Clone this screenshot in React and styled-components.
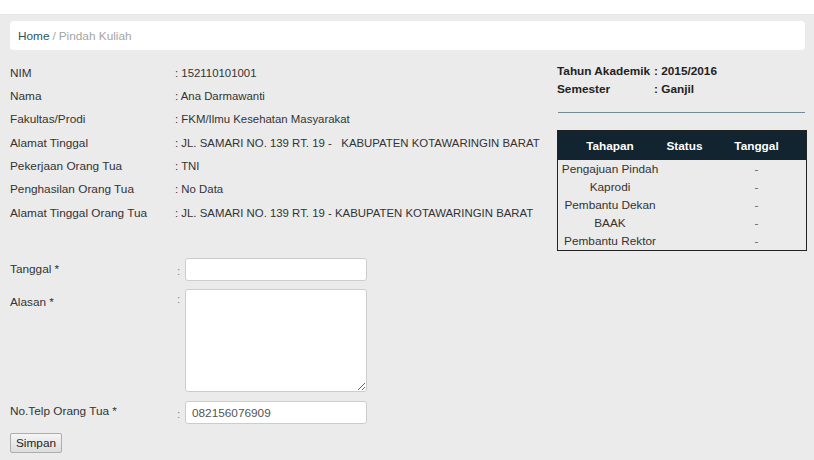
import React from 'react'
import styled, { createGlobalStyle } from 'styled-components'

const GlobalStyle = createGlobalStyle`
  body {
    margin: 0;
    background: #ebebeb;
    font-family: "Liberation Sans", Arial, sans-serif;
    font-size: 11.8px;
    color: #333;
  }
`

const TopStrip = styled.div`
  height: 14px;
  background: #fff;
  border-bottom: 1px solid #e4e4e4;
`

const Page = styled.div`
  padding: 6px 9px 0 10px;
`

const Breadcrumb = styled.div`
  height: 29px;
  background: #fff;
  border-radius: 4px;
  display: flex;
  align-items: center;
  padding: 0 8px;
  color: #a5a5a5;
`

const Crumb = styled.span`
  color: ${p => (p.$active ? '#2a5566' : '#a5a5a5')};
  margin-right: 3px;
`

const Content = styled.div`
  display: flex;
  padding-top: 11px;
`

const Left = styled.div`
  flex: 1;
  min-width: 0;
`

const InfoGrid = styled.div`
  display: grid;
  grid-template-columns: 165px 1fr;
  grid-auto-rows: 23.33px;
  align-items: center;
  line-height: 14px;
`

const Value = styled.div`
  white-space: pre;
  font-size: 11.4px;
`

const Right = styled.div`
  width: 248px;
  flex-shrink: 0;
  margin-top: 1px;
`

const MetaGrid = styled.div`
  display: grid;
  grid-template-columns: 97px auto;
  grid-auto-rows: 18px;
  align-items: center;
  font-weight: bold;
  color: #222;
`

const Rule = styled.hr`
  border: none;
  border-top: 1px solid #6f8c96;
  margin: 14px 0 0 1px;
`

const StageTable = styled.table`
  margin-top: 17px;
  width: 248px;
  border-collapse: collapse;
  table-layout: fixed;
  border: 1px solid #222;
  font-size: 11.8px;
`

const Th = styled.th`
  height: 29px;
  background: #11242f;
  color: #fff;
  font-weight: bold;
  padding: 0;
  text-align: center;
  width: ${p => p.$w}px;
`

const Td = styled.td`
  height: 18px;
  padding: 0;
  text-align: center;
  color: ${p => (p.$muted ? '#666' : '#333')};
  white-space: nowrap;
`

const Form = styled.form`
  margin-top: 34px;
`

const FormRow = styled.div`
  display: grid;
  grid-template-columns: 165px 10px 182px;
  margin-bottom: ${p => p.$gap}px;
`

const Label = styled.label`
  padding-top: ${p => p.$top}px;
  line-height: 14px;
`

const Colon = styled.span`
  align-self: ${p => (p.$multiline ? 'start' : 'end')};
  padding: ${p => (p.$multiline ? '3px 0 0 2px' : '0 0 3px 2px')};
  line-height: 14px;
  color: #888;
`

const TextInput = styled.input`
  box-sizing: border-box;
  width: 182px;
  height: 23px;
  border: 1px solid #ccc;
  border-radius: 3px;
  background: #fff;
  padding: 0 6px;
  font-family: inherit;
  font-size: 11.8px;
  color: #555;
  outline: none;
`

const TextArea = styled.textarea`
  box-sizing: border-box;
  width: 182px;
  height: 103px;
  border: 1px solid #ccc;
  border-radius: 3px;
  background: #fff;
  padding: 4px 6px;
  font-family: inherit;
  font-size: 11.8px;
  display: block;
  outline: none;
`

const SaveButton = styled.button`
  height: 20px;
  padding: 0 5px;
  font-family: inherit;
  font-size: 11.8px;
  color: #222;
  border: 1px solid #adadad;
  border-radius: 2px;
  background: linear-gradient(#f5f5f5, #dddddd);
`

const info = [
  ['NIM', '152110101001'],
  ['Nama', 'Ana Darmawanti'],
  ['Fakultas/Prodi', 'FKM/Ilmu Kesehatan Masyarakat'],
  ['Alamat Tinggal', 'JL. SAMARI NO. 139 RT. 19 -   KABUPATEN KOTAWARINGIN BARAT'],
  ['Pekerjaan Orang Tua', 'TNI'],
  ['Penghasilan Orang Tua', 'No Data'],
  ['Alamat Tinggal Orang Tua', 'JL. SAMARI NO. 139 RT. 19 - KABUPATEN KOTAWARINGIN BARAT'],
]

const stages = ['Pengajuan Pindah', 'Kaprodi', 'Pembantu Dekan', 'BAAK', 'Pembantu Rektor']

export default function App() {
  return (
    <>
      <GlobalStyle />
      <TopStrip />
      <Page>
        <Breadcrumb>
          <Crumb $active>Home</Crumb>
          <Crumb>/</Crumb>
          <Crumb>Pindah Kuliah</Crumb>
        </Breadcrumb>
        <Content>
          <Left>
            <InfoGrid>
              {info.map(([k, v]) => (
                <React.Fragment key={k}>
                  <div>{k}</div>
                  <Value>: {v}</Value>
                </React.Fragment>
              ))}
            </InfoGrid>
            <Form onSubmit={e => e.preventDefault()}>
              <FormRow $gap={8}>
                <Label $top={4}>Tanggal *</Label>
                <Colon>:</Colon>
                <TextInput type="text" />
              </FormRow>
              <FormRow $gap={9}>
                <Label $top={6}>Alasan *</Label>
                <Colon $multiline>:</Colon>
                <TextArea />
              </FormRow>
              <FormRow $gap={9}>
                <Label $top={3}>No.Telp Orang Tua *</Label>
                <Colon>:</Colon>
                <TextInput type="text" defaultValue="082156076909" />
              </FormRow>
              <SaveButton type="submit">Simpan</SaveButton>
            </Form>
          </Left>
          <Right>
            <MetaGrid>
              <div>Tahun Akademik</div>
              <div>: 2015/2016</div>
              <div>Semester</div>
              <div>: Ganjil</div>
            </MetaGrid>
            <Rule />
            <StageTable>
              <thead>
                <tr>
                  <Th $w={104}>Tahapan</Th>
                  <Th $w={45}>Status</Th>
                  <Th $w={99}>Tanggal</Th>
                </tr>
              </thead>
              <tbody>
                {stages.map(s => (
                  <tr key={s}>
                    <Td>{s}</Td>
                    <Td></Td>
                    <Td $muted>-</Td>
                  </tr>
                ))}
              </tbody>
            </StageTable>
          </Right>
        </Content>
      </Page>
    </>
  )
}
